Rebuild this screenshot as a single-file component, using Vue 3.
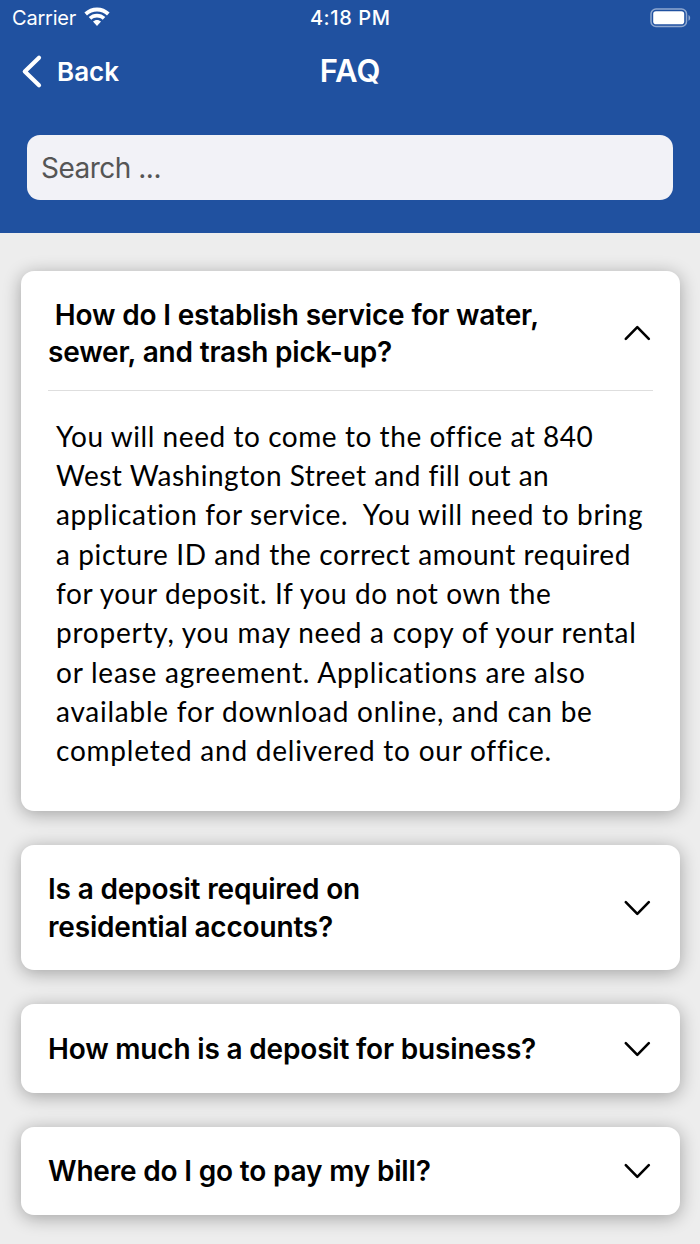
<script setup>
import { ref } from 'vue'

const items = ref([
  {
    lines: ['\u00a0How do I establish service for water,', 'sewer, and trash pick-up?'],
    open: true,
    answer: [
      'You will need to come to the office at 840',
      'West Washington Street and fill out an',
      'application for service.\u00a0 You will need to bring',
      'a picture ID and the correct amount required',
      'for your deposit. If you do not own the',
      'property, you may need a copy of your rental',
      'or lease agreement. Applications are also',
      'available for download online, and can be',
      'completed and delivered to our office.'
    ]
  },
  { lines: ['Is a deposit required on', 'residential accounts?'], open: false, answer: [] },
  { lines: ['How much is a deposit for business?'], open: false, answer: [] },
  { lines: ['Where do I go to pay my bill?'], open: false, answer: [] }
])
</script>

<template>
  <div class="screen">
    <header class="header">
      <div class="status">
        <div class="carrier">
          <span>Carrier</span>
          <svg class="wifi" width="26" height="20" viewBox="0 0 26 20">
            <path d="M13 .5C8.200 .5 3.800 2.400.4 5.600L3 8.400C5.700 5.800 9.200 4.400 13 4.400S20.300 5.800 23 8.400L25.600 5.600C22.200 2.400 17.800.5 13 .5Z" />
            <path d="M13 6.800C9.900 6.800 7 8 4.700 10.100L7.300 12.800C8.800 11.400 10.800 10.600 13 10.600S17.200 11.400 18.700 12.800L21.300 10.100C19 8 16.100 6.800 13 6.800Z" />
            <path d="M13 13C11.500 13 10.100 13.600 9 14.600L13 19L17 14.600C15.900 13.600 14.500 13 13 13Z" />
          </svg>
        </div>
        <div class="time">4:18 PM</div>
        <div class="power">
          <svg width="42" height="20" viewBox="0 0 42 20">
            <rect x="1" y="1" width="35.500" height="17.500" rx="5" fill="none" stroke="#8fa8d0" stroke-width="1.500" />
            <rect x="3.200" y="3.200" width="31" height="13" rx="2.800" fill="#fff" />
            <path d="M38.500 7V12.800C40.700 12 40.700 7.800 38.500 7Z" fill="#8fa8d0" />
          </svg>
        </div>
      </div>
      <nav class="nav">
        <div class="back">
          <svg width="22" height="36" viewBox="0 0 22 36">
            <path d="M19 3.800L4.800 17.500L19 31.200" />
          </svg>
          <span>Back</span>
        </div>
        <h1>FAQ</h1>
      </nav>
      <input class="search" type="text" placeholder="Search ..." />
    </header>
    <main class="list">
      <section v-for="(item, i) in items" :key="i" class="card">
        <div class="question" @click="item.open = !item.open">
          <h2><span v-for="line in item.lines" :key="line">{{ line }}</span></h2>
          <svg class="chevron" :class="{ up: item.open }" width="28" height="18" viewBox="0 0 28 18">
            <path d="M2.800 3.200L14.300 14.800L25.800 3.200" />
          </svg>
        </div>
        <div v-if="item.open" class="answer">
          <p v-for="(line, n) in item.answer" :key="n" :class="'line' + n">{{ line }}</p>
        </div>
      </section>
    </main>
  </div>
</template>

<style>
body { margin: 0; background: #ededed; }
</style>

<style scoped>
.screen {
  width: 700px;
  height: 1244px;
  overflow: hidden;
  background: #ededed;
  font-family: Inter, "Liberation Sans", sans-serif;
}
.header {
  box-sizing: border-box;
  height: 233.400px;
  background: #2051a0;
  color: #fff;
}
.status {
  display: grid;
  grid-template-columns: 1fr auto 1fr;
  align-items: center;
  height: 36px;
  padding: 0 8.500px 0 12px;
  font-size: 20px;
}
.carrier { display: flex; align-items: center; gap: 8px; font-weight: 400; letter-spacing: -0.200px; }
.wifi { fill: #fff; margin-top: -2px; }
.time { font-weight: 500; font-size: 20px; letter-spacing: 0.600px; margin-left: -3px; }
.power { display: flex; justify-content: flex-end; margin-top: -1px; }
.nav {
  display: grid;
  grid-template-columns: 1fr auto 1fr;
  align-items: center;
  height: 70px;
  padding: 0 20px;
}
.back { display: flex; align-items: center; gap: 15px; font-size: 26px; font-weight: 600; padding-top: 1px; }
.back path { fill: none; stroke: #fff; stroke-width: 4.200; stroke-linecap: round; stroke-linejoin: round; }
h1 { margin: -1px 0 0; font-size: 31px; font-weight: 600; letter-spacing: 0; }
.search {
  display: block;
  box-sizing: border-box;
  width: 646px;
  height: 64.500px;
  margin: 29px 27px 0;
  padding: 2px 14px 0;
  border: 0;
  border-radius: 13px;
  background: #f2f2f7;
  font: 400 28px Inter, "Liberation Sans", sans-serif;
  letter-spacing: -0.500px;
  outline: 0;
}
.search::placeholder { color: #555; opacity: 1; }
.list {
  display: flex;
  flex-direction: column;
  gap: 34px;
  padding: 37.200px 20.500px 0;
}
.card {
  border-radius: 13px;
  background: #fff;
  padding: 0 27px;
  box-shadow: 0 3px 18px rgba(0, 0, 0, 0.320);
}
.question {
  display: flex;
  align-items: center;
  justify-content: space-between;
  padding: 26.600px 2px 24.400px 0.500px;
}
.question:not(:last-child) { padding: 26px 2px 18.500px 0.500px; }
h2 { margin: 0; font-size: 28px; font-weight: 600; line-height: 37.300px; letter-spacing: -0.180px; white-space: nowrap; }
h2 span { display: block; }
.chevron { margin-top: -1px; }
.chevron path { fill: none; stroke: #000; stroke-width: 2.600; stroke-linecap: round; stroke-linejoin: round; }
.chevron.up { transform: scaleY(-1); }
.answer {
  border-top: 1px solid #dedede;
  padding: 26.200px 0 40.300px 8.500px;
  font-family: Lato, "Liberation Sans", sans-serif;
  font-size: 28px;
  line-height: 39.300px;
  letter-spacing: 0.770px;
  white-space: nowrap;
}
.answer p { margin: 0; }
.line0 { letter-spacing: 0.560px; }
.line1 { letter-spacing: 0.500px; }
.line2 { letter-spacing: 0.680px; }
.line3 { letter-spacing: 0.610px; }
.line4 { letter-spacing: 0.590px; }
</style>
